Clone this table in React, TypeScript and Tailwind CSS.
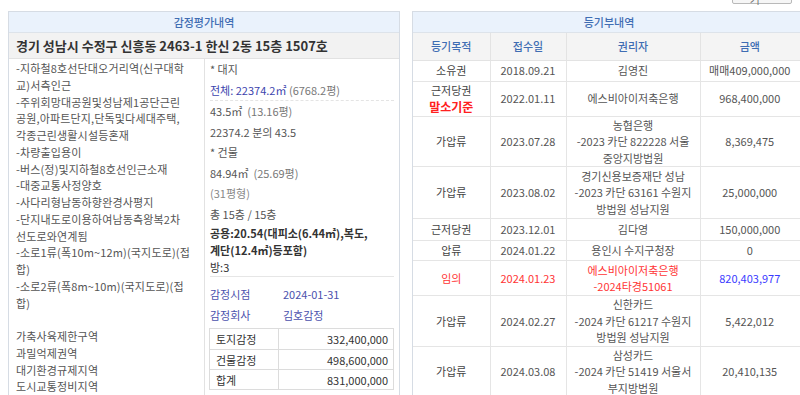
import React from "react";

type Row = {
  purpose: React.ReactNode;
  date: string;
  holder: string[];
  amount: string;
  red?: boolean;
  h?: string;
};

const rows: Row[] = [
  { purpose: "소유권", date: "2018.09.21", holder: ["김영진"], amount: "매매409,000,000", h: "h-[21px]" },
  {
    purpose: (
      <>
        <div>근저당권</div>
        <div className="text-[12px] font-bold text-[#ff2020]">말소기준</div>
      </>
    ),
    date: "2022.01.11",
    holder: ["에스비아이저축은행"],
    amount: "968,400,000",
    h: "h-[35px]",
  },
  { purpose: "가압류", date: "2023.07.28", holder: ["농협은행", "-2023 카단 822228 서울", "중앙지방법원"], amount: "8,369,475", h: "h-[50px]" },
  { purpose: "가압류", date: "2023.08.02", holder: ["경기신용보증재단 성남", "-2023 카단 63161 수원지", "방법원 성남지원"], amount: "25,000,000", h: "h-[52px]" },
  { purpose: "근저당권", date: "2023.12.01", holder: ["김다영"], amount: "150,000,000", h: "h-[22px]" },
  { purpose: "압류", date: "2024.01.22", holder: ["용인시 수지구청장"], amount: "0", h: "h-[20px]" },
  { purpose: "임의", date: "2024.01.23", holder: ["에스비아이저축은행", "-2024타경51061"], amount: "820,403,977", red: true, h: "h-[35px]" },
  { purpose: "가압류", date: "2024.02.27", holder: ["신한카드", "-2024 카단 61217 수원지", "방법원 성남지원"], amount: "5,422,012", h: "h-[50px]" },
  { purpose: "가압류", date: "2024.03.08", holder: ["삼성카드", "-2024 카단 51419 서울서", "부지방법원"], amount: "20,410,135", h: "h-[51px]" },
];

const leftLines = [
  "-지하철8호선단대오거리역(신구대학",
  "교)서측인근",
  "-주위회망대공원및성남제1공단근린",
  "공원,아파트단지,단독및다세대주택,",
  "각종근린생활시설등혼재",
  "-차량출입용이",
  "-버스(정)및지하철8호선인근소재",
  "-대중교통사정양호",
  "-사다리형남동하향완경사평지",
  "-단지내도로이용하여남동측왕복2차",
  "선도로와연계됨",
  "-소로1류(폭10m~12m)(국지도로)(접",
  "합)",
  "-소로2류(폭8m~10m)(국지도로)(접",
  "합)",
  "\u00a0",
  "가축사육제한구역",
  "과밀억제권역",
  "대기환경규제지역",
  "도시교통정비지역",
];

function Item({ children, className = "" }: { children: React.ReactNode; className?: string }) {
  return <div className={`py-[2px] leading-[16.5px] whitespace-nowrap ${className}`}>{children}</div>;
}

export default function App() {
  return (
    <div className="w-[800px] h-[395px] overflow-hidden bg-white font-['Noto_Sans_CJK_KR','Noto_Sans',sans-serif] text-[11px] text-[#555]">
      {/* top toolbar */}
      <div className="h-[11px] flex justify-end pr-[8px]">
        <div className="-mt-[16px] h-[20px] w-[60px] border border-[#b9b9b9] rounded-[2px] bg-[#f6f6f6] flex items-center gap-[3px] px-[4px] text-[#777]">
          <div className="w-[11px] h-[10px] border border-[#4a7fc4] bg-[#cfe0f6]" />
          <span className="leading-none">|미리보기</span>
        </div>
      </div>

      <div className="flex gap-[12px] pl-[8px]">
        {/* LEFT PANEL */}
        <div className="w-[392px] shrink-0 border border-[#d6dce4]">
          <div className="h-[21px] bg-[#eaf2fc] border-b border-[#dde3ea] flex items-center justify-center text-[#3f6db3] font-medium">
            감정평가내역
          </div>
          <div className="h-[26px] bg-[#f2f2f2] border-b border-[#e2e2e2] flex items-center px-[7px] text-[13px] font-bold text-[#333] whitespace-nowrap">
            경기 성남시 수정구 신흥동 2463-1 한신 2동 15층 1507호
          </div>
          <div className="flex">
            <div className="w-[196px] shrink-0 border-r border-[#e2e2e2] pl-[7px] pt-[1px] leading-[16.75px] whitespace-nowrap tracking-[0.15px]">
              {leftLines.map((l, i) => (
                <div key={i}>{l}</div>
              ))}
            </div>
            <div className="flex-1 pl-[5px] pr-[5px]">
              <Item>* 대지</Item>
              <Item className="border-b border-dashed border-[#e4e4e4]">
                <span className="text-[#3b43ad]">전체: 22374.2㎡</span>
                <span className="text-[#777]"> (6768.2평)</span>
              </Item>
              <Item>
                43.5㎡ <span className="text-[#777]">&nbsp;(13.16평)</span>
              </Item>
              <Item>22374.2 분의 43.5</Item>
              <Item>* 건물</Item>
              <Item>
                84.94㎡ <span className="text-[#777]">&nbsp;(25.69평)</span>
              </Item>
              <Item className="text-[#888]">(31평형)</Item>
              <Item>총 15층 / 15층</Item>
              <div className="py-[1px] leading-[16.75px] border-b border-[#e6e6e6] text-[#333] whitespace-nowrap">
                <div className="font-bold">공용:20.54(대피소(6.44㎡),복도,</div>
                <div className="font-bold">계단(12.4㎡)등포함)</div>
                <div>방:3</div>
              </div>
              <div className="pt-[6px] text-[#4b51ad]">
                <div className="h-[21px] flex items-center">
                  <span className="w-[73px]">감정시점</span>
                  <span>2024-01-31</span>
                </div>
                <div className="h-[21px] flex items-center">
                  <span className="w-[73px]">감정회사</span>
                  <span>김호감정</span>
                </div>
              </div>
              <div className="mt-[3px] -ml-[1px] border border-[#dcdcdc] text-[#333]">
                {[
                  ["토지감정", "332,400,000"],
                  ["건물감정", "498,600,000"],
                  ["합계", "831,000,000"],
                ].map(([k, v], i) => (
                  <div key={k} className={`flex h-[20px] ${i > 0 ? "border-t border-[#dcdcdc]" : ""}`}>
                    <div className="w-[69px] border-r border-[#dcdcdc] pl-[6px] flex items-center">{k}</div>
                    <div className="flex-1 pr-[5px] flex items-center justify-end">{v}</div>
                  </div>
                ))}
              </div>
            </div>
          </div>
        </div>

        {/* RIGHT PANEL */}
        <div className="w-[394px] shrink-0 border border-[#d6dce4]">
          <div className="h-[21px] bg-[#eaf2fc] border-b border-[#dde3ea] flex items-center justify-center text-[#3f6db3] font-medium">
            등기부내역
          </div>
          <table className="w-full table-fixed border-collapse">
            <colgroup>
              <col className="w-[77px]" />
              <col className="w-[76px]" />
              <col className="w-[134px]" />
              <col />
            </colgroup>
            <thead>
              <tr className="h-[27px] bg-[#f4f4f4] text-[#3f6db3] font-medium">
                <th className="font-medium border-r border-b border-[#e3e3e3]">등기목적</th>
                <th className="font-medium border-r border-b border-[#e3e3e3]">접수일</th>
                <th className="font-medium border-r border-b border-[#e3e3e3]">권리자</th>
                <th className="font-medium border-b border-[#e3e3e3] pr-[6px]">금액</th>
              </tr>
            </thead>
            <tbody>
              {rows.map((r, i) => {
                const red = r.red ? "text-[#ff3434]" : "";
                return (
                  <tr key={i} className={`${r.h} text-center leading-[16.5px]`}>
                    <td className={`p-0 border-r border-b border-[#e5e5e5] ${red || "text-[#444]"}`}>{r.purpose}</td>
                    <td className={`p-0 border-r border-b border-[#e5e5e5] ${red}`}>{r.date}</td>
                    <td className={`p-0 border-r border-b border-[#e5e5e5] whitespace-nowrap ${red}`}>
                      {r.holder.map((h, j) => (
                        <div key={j}>{h}</div>
                      ))}
                    </td>
                    <td className={`p-0 pr-[6px] border-b border-[#e5e5e5] ${r.red ? "text-[#3b3bff]" : ""}`}>{r.amount}</td>
                  </tr>
                );
              })}
            </tbody>
          </table>
        </div>
      </div>
    </div>
  );
}
